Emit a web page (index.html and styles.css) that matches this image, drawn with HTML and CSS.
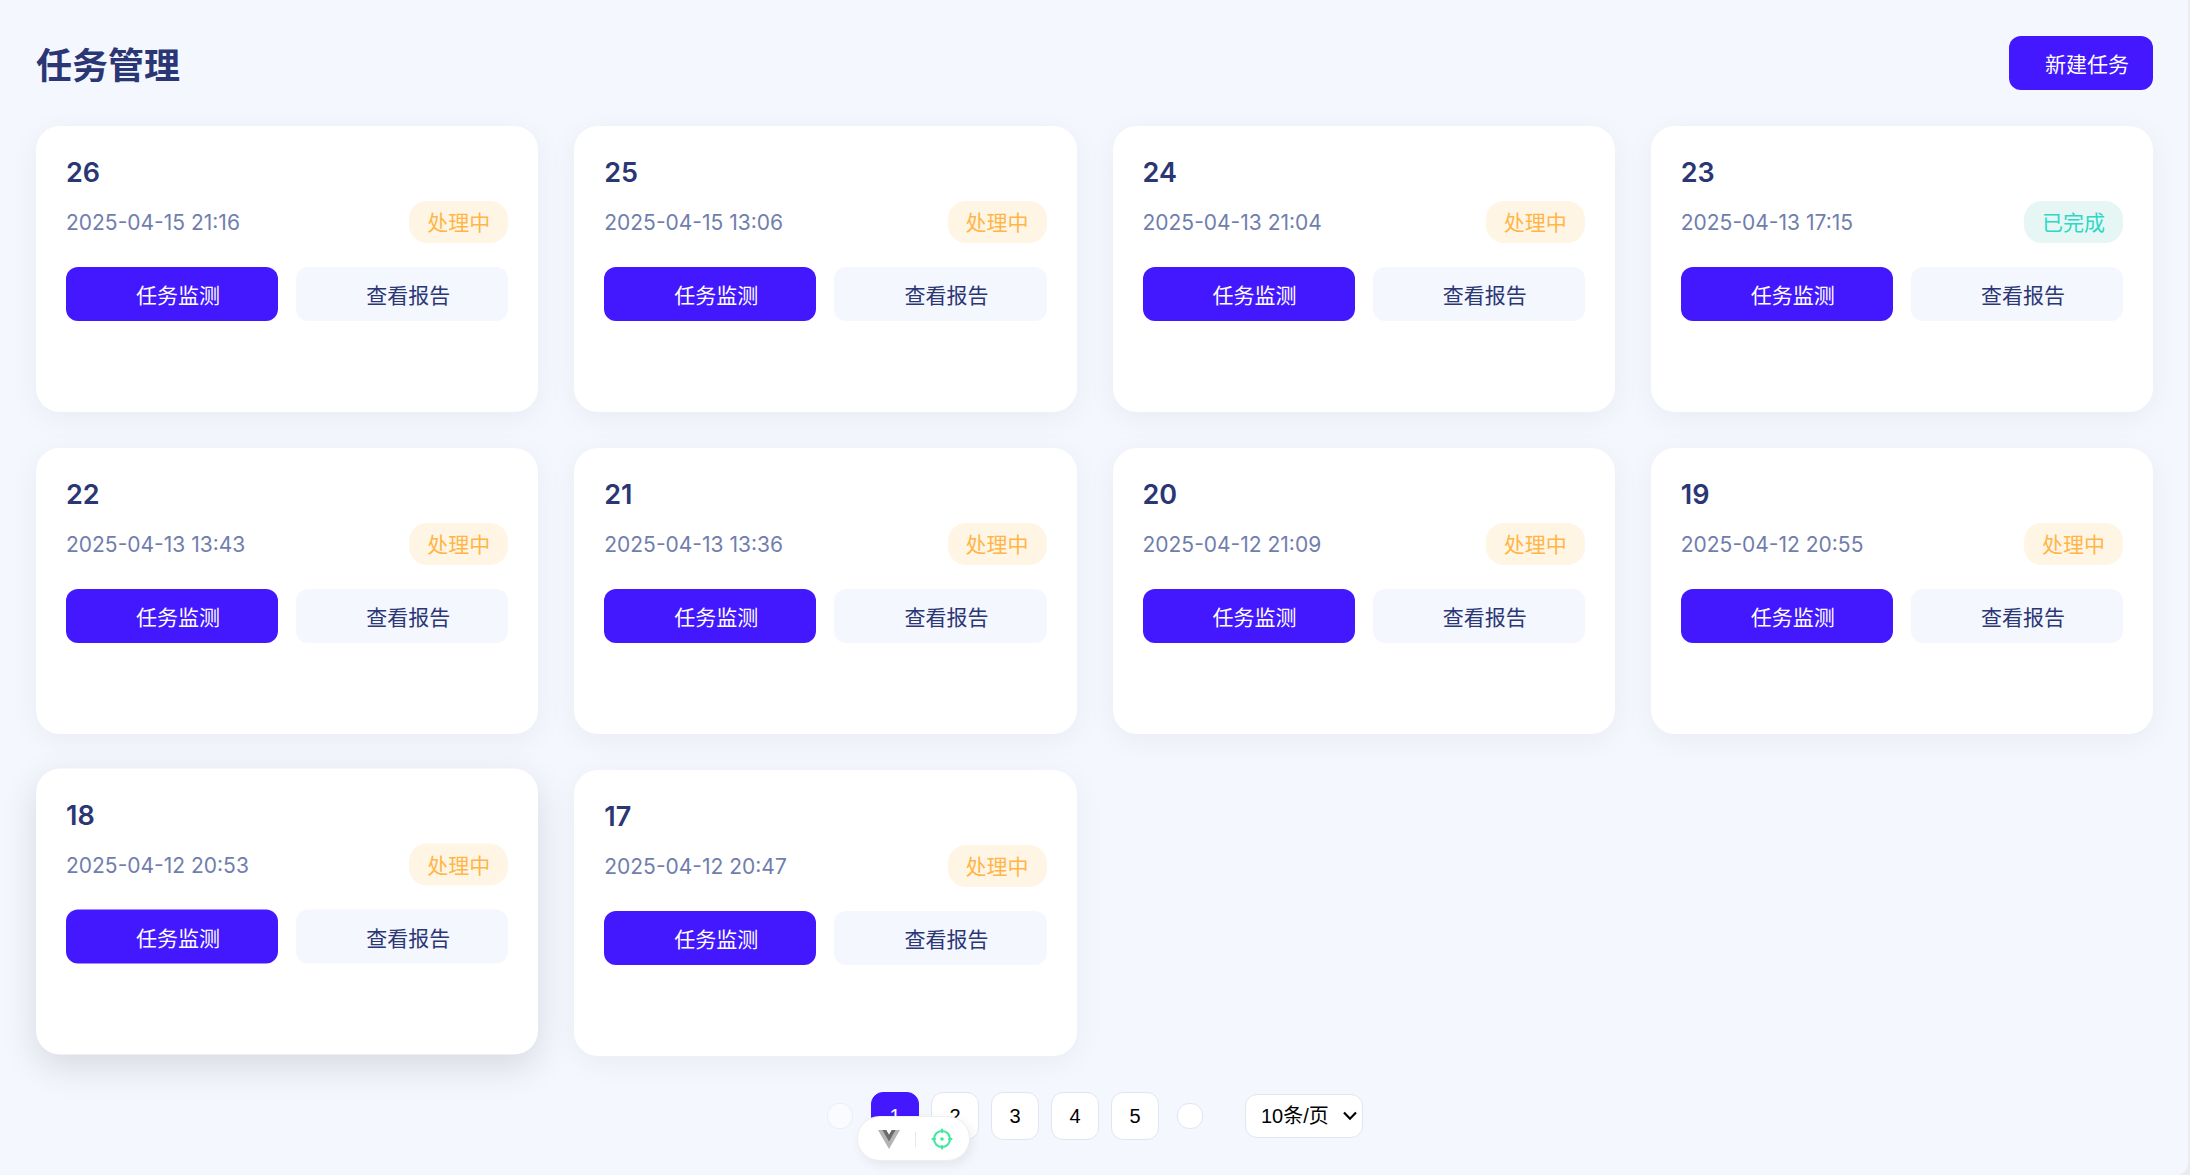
FILE: index.html
```html
<!DOCTYPE html>
<html lang="zh-CN">
<head>
<meta charset="utf-8">
<title>任务管理</title>
<link rel="stylesheet" href="styles.css">
</head>
<body>
<main class="page">
  <header class="page-header">
    <h1 class="page-title">任务管理</h1>
    <button class="btn btn-primary">新建任务</button>
  </header>

  <section class="task-grid">
    <article class="task-card">
      <h3 class="task-name">26</h3>
      <div class="task-meta"><span class="task-date">2025-04-15 21:16</span><span class="tag tag-processing">处理中</span></div>
      <div class="task-actions"><button class="btn btn-primary">任务监测</button><button class="btn btn-light">查看报告</button></div>
    </article>
    <article class="task-card">
      <h3 class="task-name">25</h3>
      <div class="task-meta"><span class="task-date">2025-04-15 13:06</span><span class="tag tag-processing">处理中</span></div>
      <div class="task-actions"><button class="btn btn-primary">任务监测</button><button class="btn btn-light">查看报告</button></div>
    </article>
    <article class="task-card">
      <h3 class="task-name">24</h3>
      <div class="task-meta"><span class="task-date">2025-04-13 21:04</span><span class="tag tag-processing">处理中</span></div>
      <div class="task-actions"><button class="btn btn-primary">任务监测</button><button class="btn btn-light">查看报告</button></div>
    </article>
    <article class="task-card">
      <h3 class="task-name">23</h3>
      <div class="task-meta"><span class="task-date">2025-04-13 17:15</span><span class="tag tag-done">已完成</span></div>
      <div class="task-actions"><button class="btn btn-primary">任务监测</button><button class="btn btn-light">查看报告</button></div>
    </article>
    <article class="task-card">
      <h3 class="task-name">22</h3>
      <div class="task-meta"><span class="task-date">2025-04-13 13:43</span><span class="tag tag-processing">处理中</span></div>
      <div class="task-actions"><button class="btn btn-primary">任务监测</button><button class="btn btn-light">查看报告</button></div>
    </article>
    <article class="task-card">
      <h3 class="task-name">21</h3>
      <div class="task-meta"><span class="task-date">2025-04-13 13:36</span><span class="tag tag-processing">处理中</span></div>
      <div class="task-actions"><button class="btn btn-primary">任务监测</button><button class="btn btn-light">查看报告</button></div>
    </article>
    <article class="task-card">
      <h3 class="task-name">20</h3>
      <div class="task-meta"><span class="task-date">2025-04-12 21:09</span><span class="tag tag-processing">处理中</span></div>
      <div class="task-actions"><button class="btn btn-primary">任务监测</button><button class="btn btn-light">查看报告</button></div>
    </article>
    <article class="task-card">
      <h3 class="task-name">19</h3>
      <div class="task-meta"><span class="task-date">2025-04-12 20:55</span><span class="tag tag-processing">处理中</span></div>
      <div class="task-actions"><button class="btn btn-primary">任务监测</button><button class="btn btn-light">查看报告</button></div>
    </article>
    <article class="task-card is-raised">
      <h3 class="task-name">18</h3>
      <div class="task-meta"><span class="task-date">2025-04-12 20:53</span><span class="tag tag-processing">处理中</span></div>
      <div class="task-actions"><button class="btn btn-primary">任务监测</button><button class="btn btn-light">查看报告</button></div>
    </article>
    <article class="task-card">
      <h3 class="task-name">17</h3>
      <div class="task-meta"><span class="task-date">2025-04-12 20:47</span><span class="tag tag-processing">处理中</span></div>
      <div class="task-actions"><button class="btn btn-primary">任务监测</button><button class="btn btn-light">查看报告</button></div>
    </article>
  </section>

  <nav class="pagination">
    <button class="page-arrow" disabled aria-label="上一页"></button>
    <div class="page-numbers">
      <button class="page-number is-active">1</button>
      <button class="page-number">2</button>
      <button class="page-number">3</button>
      <button class="page-number">4</button>
      <button class="page-number">5</button>
    </div>
    <button class="page-arrow" aria-label="下一页"></button>
    <div class="page-size">
      <span class="page-size-label">10条/页</span>
      <svg class="chevron" viewBox="0 0 14 10" width="14" height="10"><path d="M1 1.5 7 7.7 13 1.5" fill="none" stroke="#000" stroke-width="2.2"/></svg>
    </div>
  </nav>
</main>

<div class="devtools">
  <svg viewBox="0 0 22 19" width="22" height="19">
    <path d="M0 0h8.2L11 4.8 13.8 0H22L11 19z" fill="#b4b4b4"/>
    <path d="M4.4 0h3.8L11 4.8 13.8 0h3.8L11 11.4z" fill="#6b6b6b"/>
  </svg>
  <span class="devtools-divider"></span>
  <svg viewBox="0 0 22 22" width="22" height="22">
    <g fill="none" stroke="#42e8a0" stroke-width="2.2" stroke-linecap="round">
      <circle cx="11" cy="11" r="8"/>
      <path d="M11 1.5v2.5M11 18v2.5M1.5 11h2.5M18 11h2.5"/>
    </g>
    <circle cx="11" cy="11" r="1.8" fill="#42e8a0"/>
  </svg>
</div>
</body>
</html>
```
FILE: styles.css
```css
* {
  box-sizing: border-box;
}

html {
  height: 100%;
  background: #ebecf1;
}

body {
  margin: 0;
  height: 100%;
  overflow: hidden;
  font-family: Inter, "Noto Sans CJK SC", sans-serif;
  font-size: 21px;
  color: #2b3674;
}

.page {
  width: calc(100% - 2px);
  height: 100%;
  padding: 36px 35px 36px 36px;
  background: #f4f7fe;
  border-bottom-right-radius: 12px;
}

.page-header {
  display: flex;
  justify-content: space-between;
  align-items: center;
  height: 54px;
  margin-bottom: 36px;
}

.page-title {
  margin: 0;
  padding-top: 6px;
  font-size: 36px;
  font-weight: 700;
  line-height: 48px;
}

.btn {
  display: flex;
  align-items: center;
  justify-content: center;
  height: 54px;
  padding: 3px 24px 0 36px;
  border: 0;
  border-radius: 12px;
  font: inherit;
  font-weight: 400;
  line-height: 30px;
}

.btn-primary {
  background: #4318ff;
  color: #fff;
}

.btn-light {
  background: #f4f7fe;
  color: #2b3674;
}

.task-grid {
  display: grid;
  grid-template-columns: repeat(4, 1fr);
  grid-auto-rows: 286px;
  gap: 36px;
}

.task-card {
  padding: 30px;
  border-radius: 24px;
  background: #fff;
  box-shadow: 0 6px 30px rgba(0, 0, 0, 0.05);
}

.task-card.is-raised {
  transform: translateY(-1.4px);
  box-shadow: 0 12px 36px rgba(0, 0, 0, 0.12);
}

.task-name {
  margin: 0 0 12px;
  font-size: 27px;
  font-weight: 600;
  line-height: 33px;
}

.task-meta {
  display: flex;
  justify-content: space-between;
  align-items: center;
  height: 42px;
  margin-bottom: 24px;
}

.task-date {
  color: #707eae;
}

.tag {
  height: 42px;
  padding: 1px 18px 0;
  border-radius: 18px;
  line-height: 42px;
}

.tag-processing {
  background: #fff5e5;
  color: #ffb547;
}

.tag-done {
  background: #e6f6f4;
  color: #2bd9c4;
}

.task-actions {
  display: grid;
  grid-template-columns: 1fr 1fr;
  gap: 18px;
}

.pagination {
  display: flex;
  justify-content: center;
  align-items: center;
  gap: 18px;
  height: 48px;
  margin-top: 36px;
  padding-left: 1px;
  font-family: "Liberation Sans", "Noto Sans CJK SC", sans-serif;
  font-size: 20px;
  color: #000;
}

.page-numbers {
  display: flex;
  gap: 12px;
}

.page-number,
.page-arrow,
.page-size {
  padding: 0;
  border: 1px solid #e0e5f2;
  border-radius: 12px;
  background: #fff;
  font: inherit;
  color: #000;
}

.page-number {
  width: 48px;
  height: 48px;
}

.page-number.is-active {
  border-color: #4318ff;
  background: #4318ff;
  color: #fff;
}

.page-arrow {
  width: 26px;
  height: 26px;
}

.page-arrow:disabled {
  opacity: 0.5;
}

.page-size {
  display: flex;
  align-items: center;
  justify-content: space-between;
  width: 118px;
  height: 44px;
  margin-left: 24px;
  padding: 0 5px 0 15px;
}

.page-size-label {
  padding-bottom: 3px;
}

.devtools {
  position: absolute;
  left: 857px;
  top: 1116px;
  display: flex;
  align-items: center;
  justify-content: space-between;
  width: 113px;
  height: 45px;
  padding: 1px 16px 0 20px;
  border: 1px solid rgba(125, 125, 125, 0.12);
  border-radius: 23px;
  background: #fff;
  box-shadow: 3px 4px 12px rgba(0, 0, 0, 0.07);
}

.devtools-divider {
  width: 1px;
  height: 15px;
  background: #e8e8e8;
}
```
